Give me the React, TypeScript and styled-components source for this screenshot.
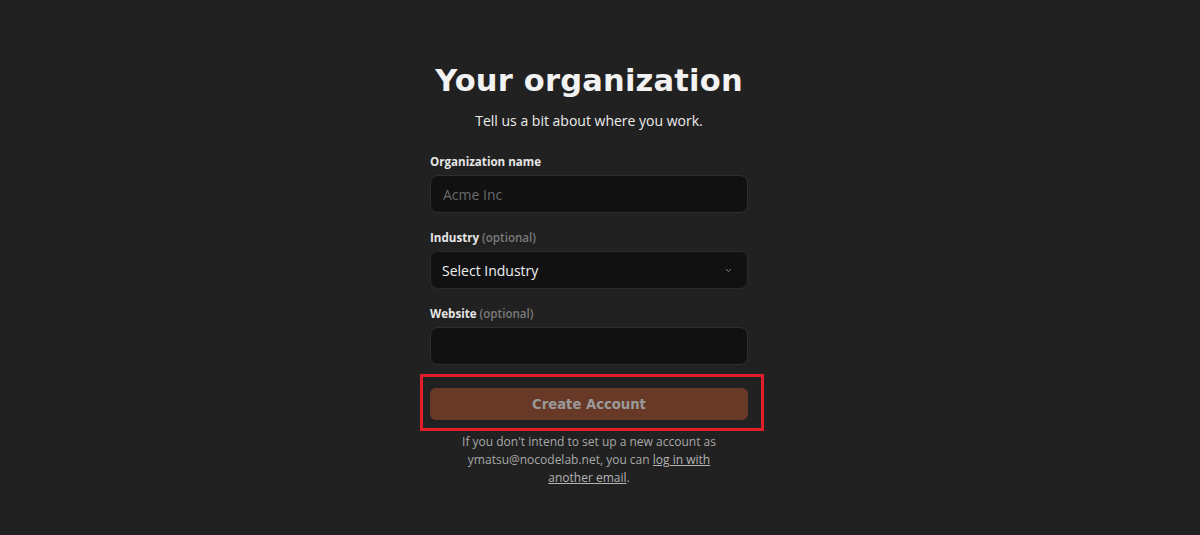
import React from 'react'
import styled, { createGlobalStyle } from 'styled-components'

const GlobalStyle = createGlobalStyle`
  html, body {
    margin: 0;
    padding: 0;
    background: #212121;
  }
  body {
    font-family: 'Open Sans', 'Noto Sans', sans-serif;
    color: #ececec;
  }
`

const Page = styled.div`
  min-height: 535px;
  display: flex;
  justify-content: center;
  padding: 61px 22px 0 0;
  box-sizing: border-box;
`

const Column = styled.div`
  width: 318px;
  display: flex;
  flex-direction: column;
  align-items: stretch;
`

const Title = styled.h1`
  margin: 0 -20px;
  font-family: 'DejaVu Sans', sans-serif;
  font-weight: 700;
  font-size: 30.5px;
  line-height: 40px;
  letter-spacing: 0.2px;
  color: #f2f2f2;
  text-align: center;
  white-space: nowrap;
`

const Subtitle = styled.p`
  margin: 10px 0 0;
  font-size: 14px;
  line-height: 20px;
  text-align: center;
  color: #ececec;
`

const Form = styled.form`
  margin-top: 22px;
  display: flex;
  flex-direction: column;
`

const Field = styled.div`
  display: flex;
  flex-direction: column;
  gap: 4px;
  margin-bottom: 16px;
`

const Label = styled.label`
  font-size: 11.6px;
  line-height: 18px;
  font-weight: 700;
  color: #e6e6e6;
`

const Optional = styled.span`
  font-weight: 600;
  color: #7a7a7a;
`

const Input = styled.input`
  height: 38px;
  box-sizing: border-box;
  border: 1px solid #2e2e2e;
  border-radius: 8px;
  background: #111111;
  padding: 0 12px;
  font-family: inherit;
  font-size: 14px;
  color: #ececec;
  outline: none;

  &::placeholder {
    color: #6a6a6a;
  }
`

const SelectBox = styled.div`
  height: 38px;
  box-sizing: border-box;
  border: 1px solid #2a2a2a;
  border-radius: 8px;
  background: #111111;
  padding: 0 14px 0 11px;
  display: flex;
  align-items: center;
  justify-content: space-between;
  font-size: 14px;
  color: #f0f0f0;
`

const Chevron = () => (
  <svg width="9" height="9" viewBox="0 0 24 24" fill="none" stroke="#8a8a8a" strokeWidth="2.5" strokeLinecap="round" strokeLinejoin="round">
    <path d="M6 9l6 6 6-6" />
  </svg>
)

const Highlight = styled.div`
  position: relative;
  margin-top: 7px;

  &::after {
    content: '';
    position: absolute;
    top: -14px;
    left: -10px;
    right: -16px;
    bottom: -11px;
    border: 3px solid #e11d2a;
    pointer-events: none;
  }
`

const SubmitButton = styled.button`
  width: 100%;
  height: 32px;
  border: none;
  border-radius: 6px;
  background: #673926;
  color: #9a9a9a;
  font-family: 'DejaVu Sans', sans-serif;
  font-weight: 700;
  font-size: 13.2px;
  cursor: not-allowed;
`

const Note = styled.p`
  margin: 13px 0 0;
  padding: 0 20px;
  font-size: 12px;
  line-height: 18px;
  color: #a8a8a8;
  text-align: center;
`

const NoteLink = styled.a`
  color: #b4b4b4;
  text-decoration: underline;
`

export default function App() {
  return (
    <>
      <GlobalStyle />
      <Page>
        <Column>
          <Title>Your organization</Title>
          <Subtitle>Tell us a bit about where you work.</Subtitle>
          <Form onSubmit={e => e.preventDefault()}>
            <Field>
              <Label>Organization name</Label>
              <Input placeholder="Acme Inc" />
            </Field>
            <Field>
              <Label>
                Industry <Optional>(optional)</Optional>
              </Label>
              <SelectBox>
                <span>Select Industry</span>
                <Chevron />
              </SelectBox>
            </Field>
            <Field>
              <Label>
                Website <Optional>(optional)</Optional>
              </Label>
              <Input />
            </Field>
            <Highlight>
              <SubmitButton type="submit" disabled>Create Account</SubmitButton>
            </Highlight>
          </Form>
          <Note>
            If you don't intend to set up a new account as ymatsu@nocodelab.net, you can{' '}
            <NoteLink href="#">log in with another email</NoteLink>.
          </Note>
        </Column>
      </Page>
    </>
  )
}
